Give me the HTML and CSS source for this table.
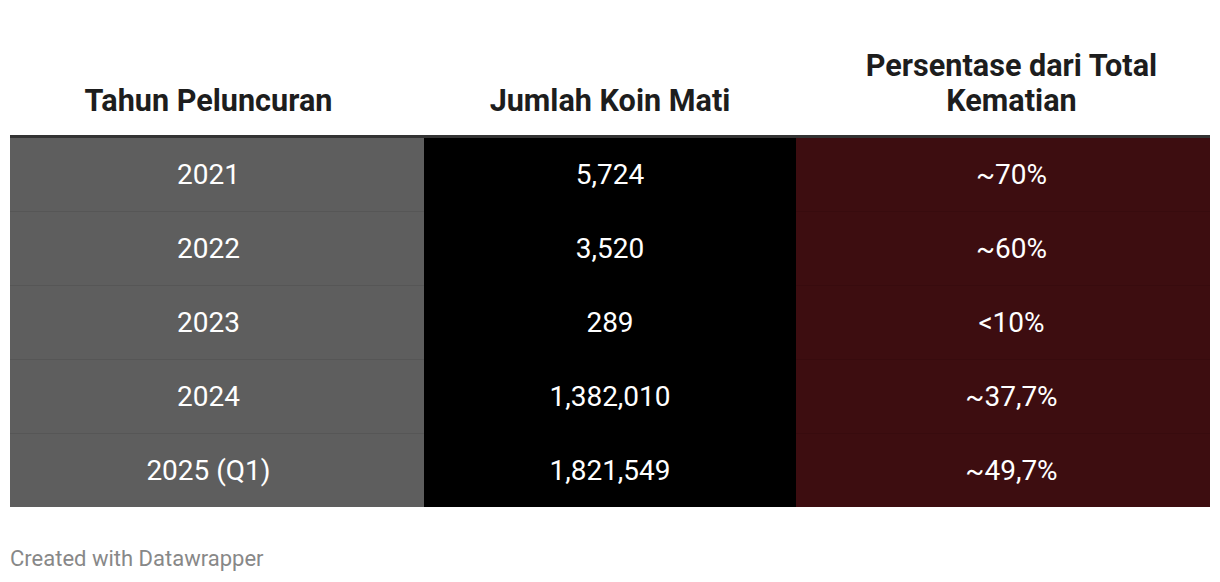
FILE: index.html
```html
<!DOCTYPE html>
<html lang="id">
<head>
<meta charset="utf-8">
<title>Koin Mati</title>
<link rel="stylesheet" href="styles.css">
</head>
<body>
<div class="chart">
  <table class="dw-table">
    <colgroup>
      <col class="w1">
      <col class="w2">
      <col class="w3">
    </colgroup>
    <thead>
      <tr>
        <th class="c1">Tahun Peluncuran</th>
        <th class="c2">Jumlah Koin Mati</th>
        <th class="c3">Persentase dari Total Kematian</th>
      </tr>
    </thead>
    <tbody>
      <tr><td class="c1">2021</td><td class="c2">5,724</td><td class="c3">~70%</td></tr>
      <tr><td class="c1">2022</td><td class="c2">3,520</td><td class="c3">~60%</td></tr>
      <tr><td class="c1">2023</td><td class="c2">289</td><td class="c3">&lt;10%</td></tr>
      <tr><td class="c1">2024</td><td class="c2">1,382,010</td><td class="c3">~37,7%</td></tr>
      <tr><td class="c1">2025 (Q1)</td><td class="c2">1,821,549</td><td class="c3">~49,7%</td></tr>
    </tbody>
  </table>
  <div class="footer">Created with Datawrapper</div>
</div>
</body>
</html>
```

FILE: styles.css
```css
html, body {
  margin: 0;
  padding: 0;
  background: #ffffff;
}
body {
  font-family: Roboto, "Liberation Sans", sans-serif;
}
.chart {
  padding: 10px 10px 0 10px;
}
.dw-table {
  width: 1200px;
  border-collapse: collapse;
  table-layout: fixed;
}
.w1 { width: 414px; }
.w2 { width: 372px; }
.w3 { width: 414px; }
.dw-table th,
.dw-table td {
  box-sizing: border-box;
}
.dw-table th {
  font-weight: 700;
  font-size: 30.6px;
  line-height: 35px;
  color: #1d1d1d;
  text-align: center;
  vertical-align: bottom;
  padding: 38px 40px 17px;
  border-bottom: 3px solid #333333;
}
.dw-table td {
  font-size: 28px;
  line-height: 30px;
  color: #ffffff;
  text-align: center;
  vertical-align: middle;
  padding: 22px 10px 21px;
  border-bottom: 1px solid rgba(0,0,0,0.08);
}
.dw-table .c1 { padding-right: 27px; }
.dw-table th.c1 { padding-right: 57px; }
.dw-table .c3 { padding-left: 27px; }
.dw-table th.c3 { padding-left: 57px; }
.dw-table tbody tr:last-child td {
  border-bottom: none;
}
.dw-table td.c1 { background: #5e5e5e; }
.dw-table td.c2 { background: #000000; }
.dw-table td.c3 { background: #3d0d10; }
.footer {
  margin-top: 39px;
  font-size: 22px;
  line-height: 26px;
  color: #888888;
}
```
